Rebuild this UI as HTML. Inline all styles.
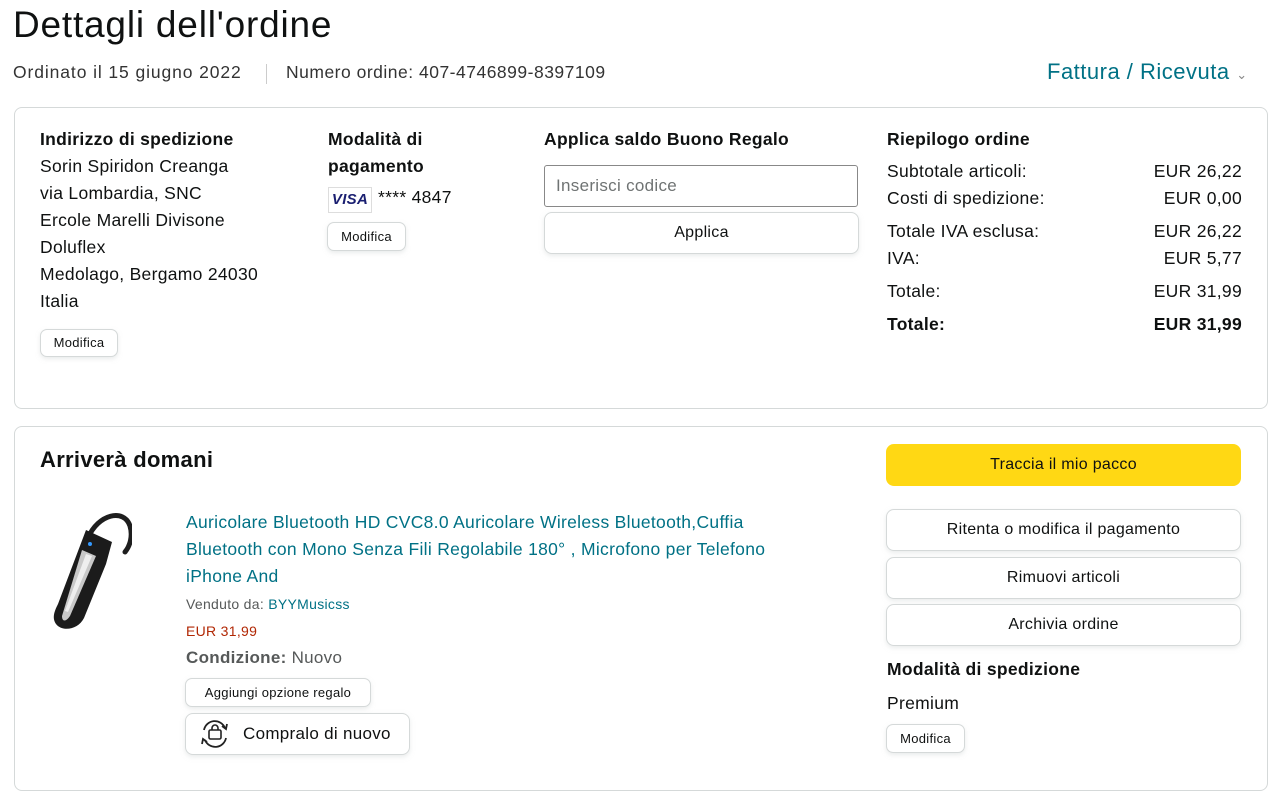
<!DOCTYPE html>
<html><head><meta charset="utf-8"><style>
*{box-sizing:border-box;margin:0;padding:0}
body{width:1280px;height:801px;background:#fff;font-family:"Liberation Sans",Arial,sans-serif;color:#0f1111;position:relative;overflow:hidden;letter-spacing:0.3px}
.a{position:absolute;white-space:nowrap}
.card{position:absolute;border:1px solid #d5d9d9;border-radius:8px}
.b{font-weight:bold}
.t{font-size:17.5px;line-height:27px}
.btn{position:absolute;border:1px solid #d5d9d9;border-radius:8px;background:#fff;box-shadow:0 2px 5px rgba(213,217,217,.5);text-align:center;font-size:16px;color:#0f1111}
.sb{position:absolute;border:1px solid #d5d9d9;border-radius:7px;background:#fff;font-size:13px;text-align:center;box-shadow:0 2px 4px rgba(213,217,217,.5)}
.link{color:#007185}
</style></head><body>
<div class="a" style="left:13px;top:3px;font-size:37px;line-height:44px;letter-spacing:0.8px">Dettagli dell'ordine</div>
<div class="a" style="left:13px;top:62px;font-size:17.5px;color:#333;letter-spacing:0.9px">Ordinato il 15 giugno 2022</div>
<div class="a" style="left:266px;top:64px;width:1px;height:20px;background:#ccc"></div>
<div class="a" style="left:286px;top:62px;font-size:17.5px;color:#333;letter-spacing:0.5px">Numero ordine: 407-4746899-8397109</div>
<div class="a link" style="left:1047px;top:59px;font-size:22px;letter-spacing:0.5px">Fattura / Ricevuta <span style="font-size:13px;color:#888">&#8964;</span></div>

<div class="card" style="left:14px;top:107px;width:1254px;height:302px"></div>
<div class="a t" style="left:40px;top:126px"><div class="b">Indirizzo di spedizione</div>Sorin Spiridon Creanga<br>via Lombardia, SNC<br>Ercole Marelli Divisone<br>Doluflex<br>Medolago, Bergamo 24030<br>Italia</div>
<div class="sb" style="left:40px;top:329px;width:78px;height:28px;line-height:26px">Modifica</div>
<div class="a t b" style="left:328px;top:126px">Modalità di<br>pagamento</div>
<div class="a" style="left:328px;top:187px;width:44px;height:26px;border:1px solid #ddd;color:#1a1f71;font-weight:bold;font-style:italic;font-size:15px;line-height:24px;text-align:center">VISA</div>
<div class="a" style="left:378px;top:187px;font-size:17.5px">**** 4847</div>
<div class="sb" style="left:327px;top:222px;width:79px;height:29px;line-height:27px">Modifica</div>
<div class="a t b" style="left:544px;top:126px">Applica saldo Buono Regalo</div>
<div class="a" style="left:544px;top:165px;width:314px;height:42px;border:1px solid #888;border-radius:3px;padding-left:11px;line-height:40px;font-size:17px;color:#6f7373">Inserisci codice</div>
<div class="btn" style="left:544px;top:212px;width:315px;height:42px;line-height:40px">Applica</div>
<div class="a t b" style="left:887px;top:126px">Riepilogo ordine</div>
<div class="a t" style="left:887px;top:158px;width:355px;line-height:27px">
<div style="display:flex;justify-content:space-between"><span>Subtotale articoli:</span><span>EUR 26,22</span></div>
<div style="display:flex;justify-content:space-between"><span>Costi di spedizione:</span><span>EUR 0,00</span></div>
<div style="display:flex;justify-content:space-between;margin-top:6px"><span>Totale IVA esclusa:</span><span>EUR 26,22</span></div>
<div style="display:flex;justify-content:space-between"><span>IVA:</span><span>EUR 5,77</span></div>
<div style="display:flex;justify-content:space-between;margin-top:6px"><span>Totale:</span><span>EUR 31,99</span></div>
<div class="b" style="display:flex;justify-content:space-between;margin-top:6px"><span>Totale:</span><span>EUR 31,99</span></div>
</div>

<div class="card" style="left:14px;top:426px;width:1254px;height:365px"></div>
<div class="a b" style="left:40px;top:447px;font-size:22px">Arriverà domani</div>
<svg class="a" style="left:50px;top:508px" width="82" height="125" viewBox="0 0 82 125">
<path d="M38 30 C48 6 74 0 80 18 C83 28 80 38 75 44" fill="none" stroke="#1e1e1e" stroke-width="5" stroke-linecap="round"/>
<path d="M36 22 L62 34 L56 56 L34 110 C28 122 12 124 6 116 C2 110 4 104 8 96 Z" fill="#1b1b1b"/>
<path d="M32 42 L46 48 L20 108 C16 114 12 114 12 108 Z" fill="#c8c8c8"/>
<path d="M36 46 L42 48 L18 104 L15 103 Z" fill="#eee"/>
<circle cx="40" cy="36" r="2" fill="#39f"/>
</svg>
<div class="a t link" style="left:186px;top:509px">Auricolare Bluetooth HD CVC8.0 Auricolare Wireless Bluetooth,Cuffia<br>Bluetooth con Mono Senza Fili Regolabile 180° , Microfono per Telefono<br>iPhone And</div>
<div class="a" style="left:186px;top:596px;font-size:14px;color:#565959">Venduto da: <span class="link">BYYMusicss</span></div>
<div class="a" style="left:186px;top:623px;font-size:14px;color:#b12704">EUR 31,99</div>
<div class="a" style="left:186px;top:648px;font-size:17px;color:#565959"><b>Condizione:</b> Nuovo</div>
<div class="sb" style="left:185px;top:678px;width:186px;height:29px;line-height:27px">Aggiungi opzione regalo</div>
<div class="btn" style="left:185px;top:713px;width:225px;height:42px;line-height:40px;font-size:17px;text-align:left;padding-left:57px">Compralo di nuovo</div>
<svg class="a" style="left:198px;top:718px" width="34" height="32" viewBox="0 0 34 32"><path d="M6 12 A11 11 0 0 1 27 10 M28 20 A11 11 0 0 1 7 22" fill="none" stroke="#222" stroke-width="1.8"/><path d="M24 8 L28 11 L29 6 M9 24 L5 21 L4 26" fill="none" stroke="#222" stroke-width="1.8"/><rect x="11" y="12" width="12" height="9" rx="1.5" fill="none" stroke="#222" stroke-width="1.6"/><path d="M14 12 V10 a3 3 0 0 1 6 0 V12" fill="none" stroke="#222" stroke-width="1.6"/></svg>

<div class="a" style="left:886px;top:444px;width:355px;height:42px;border-radius:8px;background:#ffd814;text-align:center;line-height:42px;font-size:16px">Traccia il mio pacco</div>
<div class="btn" style="left:886px;top:509px;width:355px;height:42px;line-height:40px">Ritenta o modifica il pagamento</div>
<div class="btn" style="left:886px;top:557px;width:355px;height:42px;line-height:40px">Rimuovi articoli</div>
<div class="btn" style="left:886px;top:604px;width:355px;height:42px;line-height:40px">Archivia ordine</div>
<div class="a t b" style="left:887px;top:656px">Modalità di spedizione</div>
<div class="a t" style="left:887px;top:690px">Premium</div>
<div class="sb" style="left:886px;top:724px;width:79px;height:29px;line-height:27px">Modifica</div>
</body></html>
